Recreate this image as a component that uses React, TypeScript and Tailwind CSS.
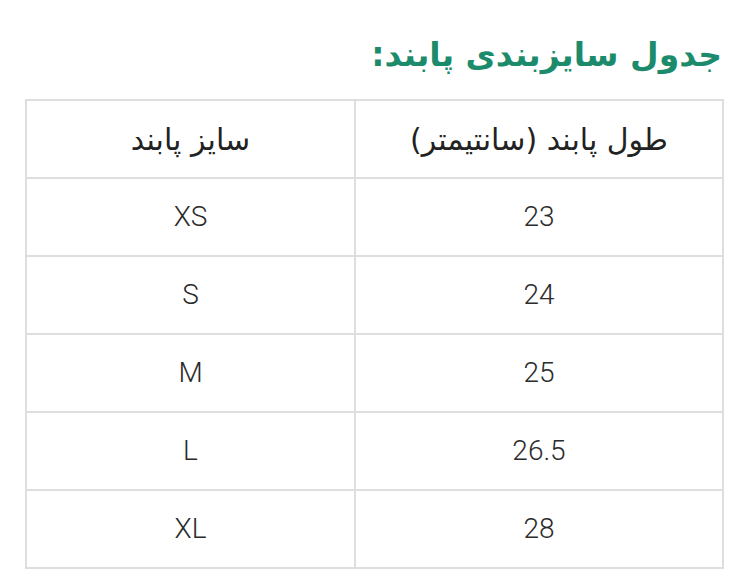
const rows = [
  { size: 'XS', length: '23' },
  { size: 'S', length: '24' },
  { size: 'M', length: '25' },
  { size: 'L', length: '26.5' },
  { size: 'XL', length: '28' },
]

export default function App() {
  return (
    <div dir="rtl" className="w-[751px] h-[588px] bg-white pt-[30px] pr-[27px] pl-[27px] font-['DejaVu_Sans',sans-serif]">
      <h2 className="text-[33px] leading-[50px] font-bold text-[#1b8b6b] h-[69px] pr-[2px]">
        جدول سایزبندی پابند:
      </h2>

      <table className="w-[697px] border-collapse border-2 border-[#dedede] table-fixed">
        <colgroup>
          <col className="w-[368px]" />
          <col className="w-[329px]" />
        </colgroup>
        <thead>
          <tr className="h-[78px]">
            <th className="border-2 border-[#dedede] text-center font-normal text-[30px] text-[#222]">
              طول پابند (سانتیمتر)
            </th>
            <th className="border-2 border-[#dedede] text-center font-normal text-[30px] text-[#222]">
              سایز پابند
            </th>
          </tr>
        </thead>
        <tbody>
          {rows.map((row) => (
            <tr key={row.size} className="h-[78px]">
              <td className="border-2 border-[#dedede] text-center text-[28px] font-light text-[#2b2b2b] font-['Roboto',sans-serif]">
                {row.length}
              </td>
              <td className="border-2 border-[#dedede] text-center text-[28px] font-light text-[#2b2b2b] font-['Roboto',sans-serif]">
                {row.size}
              </td>
            </tr>
          ))}
        </tbody>
      </table>
    </div>
  )
}
